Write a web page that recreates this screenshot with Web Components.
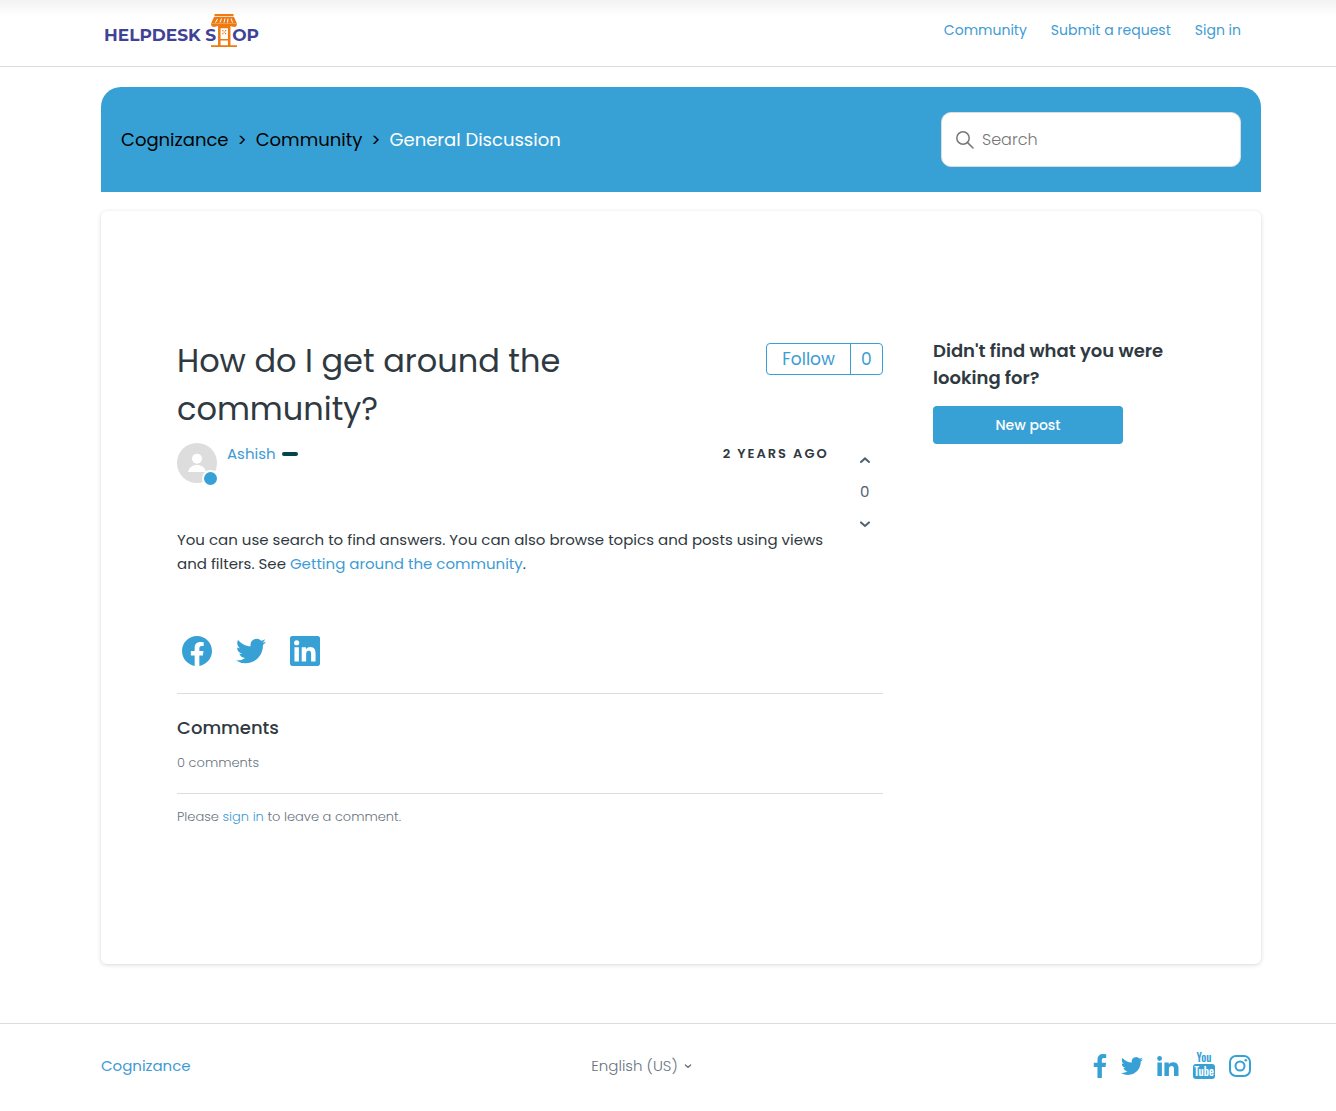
<!DOCTYPE html>
<html lang="en-US">
<head>
<meta charset="utf-8">
<meta name="viewport" content="width=device-width, initial-scale=1">
<title>How do I get around the community? – Cognizance</title>
<style>
    body {
        margin: 0;
        background: #fff;
        color: #2f3941;
        font-family: Poppins, Inter, "Liberation Sans", sans-serif;
        font-size: 15px;
        font-weight: 400;
        line-height: 24px;
        --brand: #37a1d6;
        --link: #3e9bd3;
        --muted: #68737d;
        --line: #ddd;
        --gutter: 0 75px 0 101px;
    }
</style>
</head>
<body>
<helpdesk-page></helpdesk-page>

<script>
const ICONS = {
    facebookRound: ['0 0 24 24', '<path d="M24 12.073c0-6.627-5.373-12-12-12s-12 5.373-12 12c0 5.99 4.388 10.954 10.125 11.854v-8.385H7.078v-3.47h3.047V9.43c0-3.007 1.792-4.669 4.533-4.669 1.312 0 2.686.235 2.686.235v2.953H15.83c-1.491 0-1.956.925-1.956 1.874v2.25h3.328l-.532 3.47h-2.796v8.385C19.612 23.027 24 18.062 24 12.073z"/>'],
    twitter: ['0 0 24 24', '<path d="M23.953 4.57a10 10 0 01-2.825.775 4.958 4.958 0 002.163-2.723c-.951.555-2.005.959-3.127 1.184a4.92 4.92 0 00-8.384 4.482C7.69 8.095 4.067 6.13 1.64 3.162a4.822 4.822 0 00-.666 2.475c0 1.71.87 3.213 2.188 4.096a4.904 4.904 0 01-2.228-.616v.06a4.923 4.923 0 003.946 4.827 4.996 4.996 0 01-2.212.085 4.936 4.936 0 004.604 3.417 9.867 9.867 0 01-6.102 2.105c-.39 0-.779-.023-1.17-.067a13.995 13.995 0 007.557 2.209c9.053 0 13.998-7.496 13.998-13.985 0-.21 0-.42-.015-.63A9.935 9.935 0 0024 4.59z"/>'],
    linkedinSquare: ['0 0 24 24', '<path d="M20.447 20.452h-3.554v-5.569c0-1.328-.027-3.037-1.852-3.037-1.853 0-2.136 1.445-2.136 2.939v5.667H9.351V9h3.414v1.561h.046c.477-.9 1.637-1.85 3.37-1.85 3.601 0 4.267 2.37 4.267 5.455v6.286zM5.337 7.433a2.062 2.062 0 01-2.063-2.065 2.064 2.064 0 112.063 2.065zm1.782 13.019H3.555V9h3.564v11.452zM22.225 0H1.771C.792 0 0 .774 0 1.729v20.542C0 23.227.792 24 1.771 24h20.451C23.2 24 24 23.227 24 22.271V1.729C24 .774 23.2 0 22.222 0h.003z"/>'],
    facebook: ['479 0 864 1664', '<path d="M1343 12v264h-157q-86 0-116 36t-30 108v189h293l-39 296h-254v759h-306v-759h-255v-296h255v-218q0-186 104-288.5t277-102.5q147 0 228 12z"/>'],
    linkedin: ['0 0 22 20', '<circle cx="2.6" cy="2.5" r="2.4"/><path d="M.4 6.6h4.5V20H.4zM7.4 6.6h4.4v1.9c.8-1.3 2.2-2.2 4.3-2.2 3.4 0 5.4 2.1 5.4 6V20H17v-7.1c0-1.9-.7-3-2.4-3-1.6 0-2.7 1-2.7 2.9V20H7.4z"/>'],
    youtube: ['0 0 22 26', '<rect x="0" y="11" width="22" height="15" rx="3"/><text x="11" y="9" text-anchor="middle">You</text><text x="11" y="23" text-anchor="middle" class="inverse">Tube</text>'],
    instagram: ['0 0 22 22', '<g fill="none" stroke="currentColor" stroke-width="2"><rect x="1" y="1" width="20" height="20" rx="6"/><circle cx="11" cy="11" r="4.5"/></g><circle cx="16.8" cy="5.2" r="1.3"/>'],
    search: ['0 0 18 18', '<g fill="none" stroke="currentColor" stroke-width="1.5" stroke-linecap="round"><circle cx="7" cy="7" r="6.2"/><path d="M11.6 11.6l5.4 5.4"/></g>'],
    up: ['0 0 12 12', '<path d="M2 8l4-3.6L10 8" fill="none" stroke="currentColor" stroke-width="2" stroke-linecap="round"/>'],
    down: ['0 0 12 12', '<path d="M2 4.4L6 8l4-3.6" fill="none" stroke="currentColor" stroke-width="2" stroke-linecap="round"/>'],
    avatar: ['0 0 40 40', '<circle cx="20" cy="20" r="20" fill="#ddd"/><circle cx="20" cy="15.7" r="5" fill="#fff"/><path d="M11 29c1-4.6 4.5-7 9-7s8 2.4 9 7z" fill="#fff"/>'],
    shop: ['0 0 28 34', `
        <path d="M4.500 0h19v2.200h-19zM4 3h20l3 6.500H1z"/>
        <path d="M1 9.500h26c0 2.500-1 3.500-3 3.500s-2.500-1-3.500-1-1.500 1-3 1-2.500-1-3.500-1-2 1-3.500 1-2-1-3-1-1.500 1-3.500 1-3-1-3-3.500z"/>
        <path d="M7.500 5L5.500 8.500M11.500 4.500l-1.500 4M15 4.500l-1 4M18 4.500l-.5 4M21 4.500l1.500 4" stroke="#fff" stroke-width="1"/>
        <path d="M8 12h12.500v20H8z" fill="#fff"/>
        <path d="M9.300 12v20M19.200 12v20" stroke="currentColor" stroke-width="2.500"/>
        <path d="M8 12h12v2.200H8zM9 25h10v1.600H9zM1 31.200h26V33H1z"/>
        <path d="M12.200 16h1.200v1.200h-1.200zM15 16h1.200v1.200H15zM13.600 17.500h1.200v1.200h-1.200zM12.200 19h1.200v1.200h-1.200zM15 19h1.200v1.200H15z"/>`],
};

const BASE = `
    * { box-sizing: border-box; }
    a { color: var(--link); text-decoration: none; }
    a:hover { text-decoration: underline; }
    button, input, select { font: inherit; }
    button { cursor: pointer; }
    h1, h2, h3, p, ol { margin: 0; padding: 0; }
`;

function define(name, css, html) {
    customElements.define(name, class extends HTMLElement {
        constructor() {
            super();
            this.attachShadow({ mode: 'open' });
        }

        connectedCallback() {
            this.shadowRoot.innerHTML = `<style>${BASE}${css}</style>${html}`;
        }
    });
}

class HdIcon extends HTMLElement {
    constructor() {
        super();
        this.attachShadow({ mode: 'open' });
    }

    connectedCallback() {
        const [viewBox, shapes] = ICONS[this.getAttribute('name')];
        this.shadowRoot.innerHTML = `
            <style>
                :host { display: inline-block; flex: none; }
                svg { display: block; width: 100%; height: 100%; fill: currentColor; overflow: visible; }
                text { font: 500 11px Oswald, "Roboto Condensed", "Liberation Sans Narrow", sans-serif; }
                .inverse { fill: #fff; }
            </style>
            <svg viewBox="${viewBox}" aria-hidden="true">${shapes}</svg>
        `;
    }
}
customElements.define('hd-icon', HdIcon);

define('site-header', `
    :host {
        display: block;
        border-bottom: 1px solid var(--line);
        background: linear-gradient(#f3f3f3, #fff 17px);
    }
    header {
        display: flex;
        justify-content: space-between;
        height: 66px;
        margin: var(--gutter);
        padding: 0 20px 0 3px;
    }
    .logo {
        display: flex;
        align-items: center;
        align-self: flex-start;
        height: 34px;
        margin-top: 14px;
        color: #3f4397;
        font-family: Montserrat, Poppins, sans-serif;
        font-size: 17px;
        font-weight: 700;
    }
    .logo span { padding-top: 8px; }
    .logo hd-icon {
        width: 28px;
        height: 34px;
        margin: 0 -6px;
        color: #ee7a12;
    }
    nav {
        display: flex;
        gap: 24px;
        margin-top: 18px;
        font-size: 14px;
    }
`, `
    <header>
        <a class="logo" href="#"><span>HELPDESK S</span><hd-icon name="shop"></hd-icon><span>OP</span></a>
        <nav>
            <a href="#">Community</a>
            <a href="#">Submit a request</a>
            <a href="#">Sign in</a>
        </nav>
    </header>
`);

define('search-box', `
    :host { display: block; width: 300px; }
    form {
        display: flex;
        align-items: center;
        gap: 8px;
        height: 55px;
        padding: 0 14px;
        border: 1px solid var(--line);
        border-radius: 10px;
        background: #fff;
        color: #777;
    }
    hd-icon { width: 18px; height: 18px; }
    input {
        flex: 1;
        min-width: 0;
        padding: 0;
        border: 0;
        outline: 0;
        background: none;
        color: #555;
        font-size: 16px;
        font-weight: 300;
    }
    input::placeholder { color: #777; opacity: 1; }
`, `
    <form role="search">
        <hd-icon name="search"></hd-icon>
        <input type="search" placeholder="Search" aria-label="Search">
    </form>
`);

define('page-banner', `
    :host {
        display: flex;
        align-items: center;
        justify-content: space-between;
        padding: 25px 20px;
        border-radius: 20px 20px 0 0;
        background: var(--brand);
    }
    ol {
        display: flex;
        list-style: none;
        font-size: 18px;
    }
    li + li::before { content: ">"; margin: 0 9px; color: #000; font-size: 17px; }
    a { color: #000; }
    li:last-child { color: #fff; }
`, `
    <nav aria-label="Breadcrumb">
        <ol>
            <li><a href="#">Cognizance</a></li>
            <li><a href="#">Community</a></li>
            <li>General Discussion</li>
        </ol>
    </nav>
    <search-box></search-box>
`);

define('follow-button', `
    :host { display: block; flex: none; }
    button {
        display: flex;
        padding: 0;
        border: 1px solid var(--brand);
        border-radius: 4px;
        background: #fff;
        color: var(--link);
        font-size: 17px;
        line-height: 30px;
    }
    span { padding: 0 15px; }
    .count { padding: 0 10px; border-left: 1px solid var(--brand); }
`, `
    <button type="button"><span>Follow</span><span class="count">0</span></button>
`);

define('vote-control', `
    :host {
        display: flex;
        flex: none;
        flex-direction: column;
        align-items: center;
        gap: 8px;
        width: 36px;
        padding-top: 5px;
        color: #52616e;
    }
    button {
        display: flex;
        align-items: center;
        justify-content: center;
        width: 24px;
        height: 24px;
        padding: 0;
        border: 0;
        background: none;
        color: inherit;
    }
    hd-icon { width: 12px; height: 12px; }
`, `
    <button type="button" aria-label="Vote up"><hd-icon name="up"></hd-icon></button>
    <span>0</span>
    <button type="button" aria-label="Vote down"><hd-icon name="down"></hd-icon></button>
`);

define('post-author', `
    :host { display: flex; gap: 10px; height: 40px; }
    .avatar { position: relative; width: 40px; height: 40px; }
    .avatar hd-icon { width: 40px; height: 40px; }
    .badge {
        position: absolute;
        right: -2px;
        bottom: -4px;
        width: 17px;
        height: 17px;
        border: 2px solid #fff;
        border-radius: 50%;
        background: var(--brand);
    }
    .name {
        display: flex;
        align-items: center;
        gap: 6px;
        flex: 1;
        height: 22px;
    }
    .tag { width: 16px; height: 4px; border-radius: 2px; background: #04444d; }
    time {
        font-size: 13px;
        font-weight: 600;
        line-height: 22px;
        letter-spacing: 2px;
        text-transform: uppercase;
    }
`, `
    <div class="avatar"><hd-icon name="avatar"></hd-icon><span class="badge"></span></div>
    <div class="name"><a href="#">Ashish</a><span class="tag"></span></div>
    <time>2 years ago</time>
`);

define('community-post', `
    :host { display: block; }
    .title { display: flex; align-items: flex-start; gap: 40px; margin-bottom: 10px; }
    h1 { flex: 1; font-size: 32px; font-weight: 400; line-height: 48px; }
    follow-button { margin-top: 6px; }
    .post { display: flex; gap: 18px; }
    .content { flex: 1; min-width: 0; }
    .body { margin-top: 45px; }
    .share {
        display: flex;
        gap: 24px;
        padding: 60px 5px 27px;
        border-bottom: 1px solid var(--line);
    }
    .share a { display: flex; color: var(--brand); }
    .share hd-icon { width: 30px; height: 30px; }
`, `
    <div class="title">
        <h1>How do I get around the community?</h1>
        <follow-button></follow-button>
    </div>
    <div class="post">
        <div class="content">
            <post-author></post-author>
            <p class="body">You can use search to find answers. You can also browse topics and posts using views and filters. See <a href="#">Getting around the community</a>.</p>
        </div>
        <vote-control></vote-control>
    </div>
    <div class="share">
        <a href="#" aria-label="Facebook"><hd-icon name="facebookRound"></hd-icon></a>
        <a href="#" aria-label="Twitter"><hd-icon name="twitter"></hd-icon></a>
        <a href="#" aria-label="LinkedIn"><hd-icon name="linkedinSquare"></hd-icon></a>
    </div>
`);

define('post-comments', `
    :host {
        display: block;
        padding-top: 20px;
        color: var(--muted);
        font-size: 13px;
        font-weight: 300;
        line-height: 20px;
    }
    h2 { color: #2f3941; font-size: 18px; font-weight: 500; line-height: 28px; }
    .count { padding: 11px 0 20px; border-bottom: 1px solid var(--line); }
    .callout { padding-top: 13px; }
`, `
    <h2>Comments</h2>
    <p class="count">0 comments</p>
    <p class="callout">Please <a href="#">sign in</a> to leave a comment.</p>
`);

define('post-sidebar', `
    :host { display: block; }
    h3 { font-size: 18px; font-weight: 600; line-height: 27px; }
    button {
        width: 190px;
        height: 38px;
        margin-top: 15px;
        border: 0;
        border-radius: 4px;
        background: var(--brand);
        color: #fff;
        font-size: 14px;
        font-weight: 500;
    }
`, `
    <h3>Didn't find what you were looking for?</h3>
    <button type="button">New post</button>
`);

define('content-card', `
    :host {
        display: flex;
        justify-content: space-between;
        margin: 19px 0 59px;
        padding: 125px 75px 136px;
        border: 1px solid transparent;
        border-radius: 6px;
        box-shadow: 0 1px 4px rgba(0, 0, 0, .16);
    }
    .main { width: 70%; }
    .side { width: 25%; }
`, `
    <div class="main"><slot></slot></div>
    <aside class="side"><slot name="side"></slot></aside>
`);

define('site-footer', `
    :host { display: block; border-top: 1px solid var(--line); }
    footer {
        display: flex;
        align-items: center;
        justify-content: space-between;
        height: 84px;
        margin: var(--gutter);
        padding-right: 10px;
    }
    .language { display: flex; align-items: center; gap: 6px; color: var(--muted); font-weight: 300; }
    select {
        appearance: none;
        padding: 0;
        border: 0;
        background: none;
        color: inherit;
        cursor: pointer;
    }
    .language hd-icon { width: 8px; height: 8px; }
    .social { display: flex; align-items: center; gap: 14px; }
    .social a { display: flex; color: var(--brand); }
    .social hd-icon { width: 22px; height: 24px; }
    .social hd-icon[name="facebook"] { width: 14px; }
    .social hd-icon[name="youtube"] { height: 26px; }
`, `
    <footer>
        <a class="home" href="#">Cognizance</a>
        <label class="language">
            <select aria-label="Language"><option>English (US)</option></select>
            <hd-icon name="down"></hd-icon>
        </label>
        <div class="social">
            <a href="#" aria-label="Facebook"><hd-icon name="facebook"></hd-icon></a>
            <a href="#" aria-label="Twitter"><hd-icon name="twitter"></hd-icon></a>
            <a href="#" aria-label="LinkedIn"><hd-icon name="linkedin"></hd-icon></a>
            <a href="#" aria-label="YouTube"><hd-icon name="youtube"></hd-icon></a>
            <a href="#" aria-label="Instagram"><hd-icon name="instagram"></hd-icon></a>
        </div>
    </footer>
`);

define('helpdesk-page', `
    :host { display: block; }
    main { margin: var(--gutter); padding-top: 20px; }
`, `
    <site-header></site-header>
    <main>
        <page-banner></page-banner>
        <content-card>
            <community-post></community-post>
            <post-comments></post-comments>
            <post-sidebar slot="side"></post-sidebar>
        </content-card>
    </main>
    <site-footer></site-footer>
`);
</script>
</body>
</html>
